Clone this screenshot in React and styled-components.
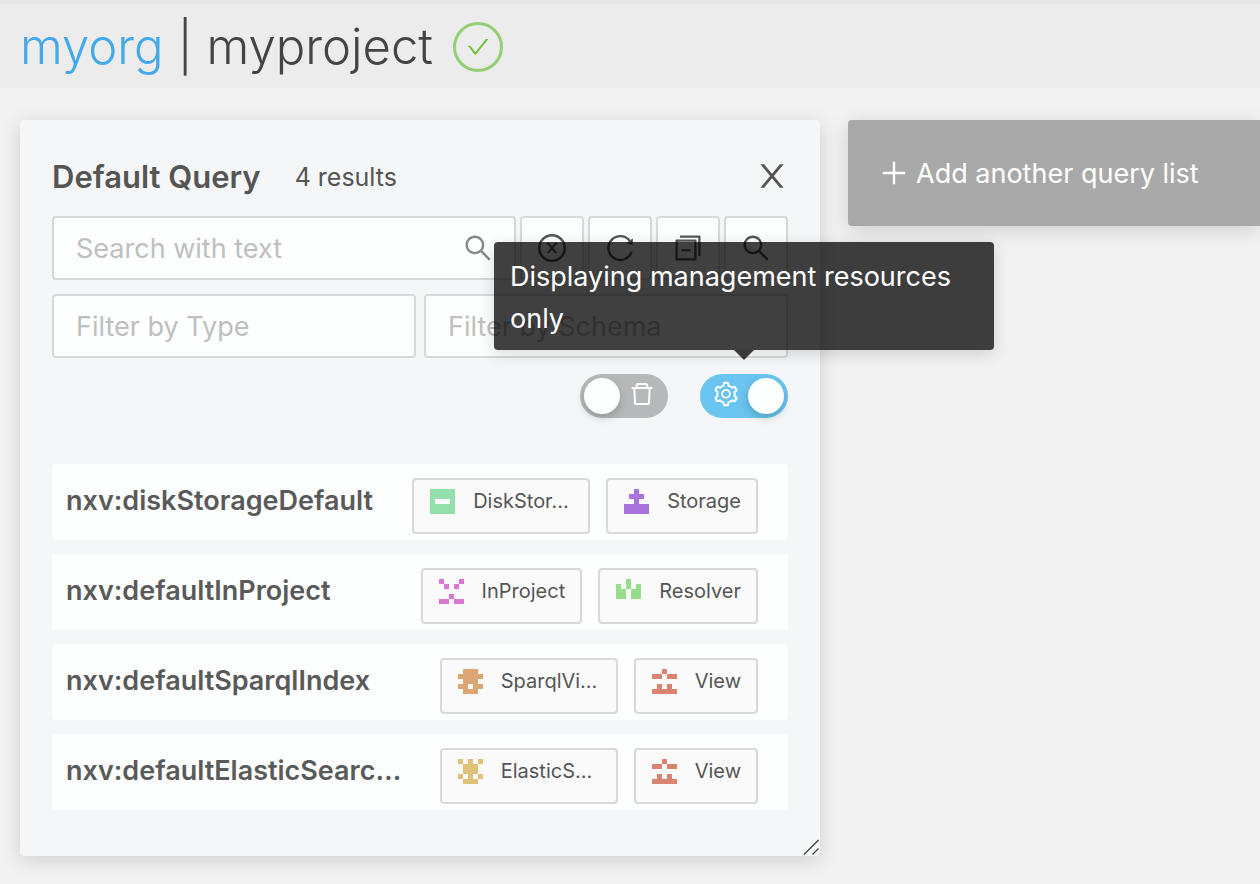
import React, { useState } from "react";
import styled, { createGlobalStyle } from "styled-components";
import {
  AiOutlineSearch,
  AiOutlineReload,
  AiOutlineSwitcher,
  AiOutlineDelete,
  AiOutlineSetting,
  AiOutlinePlus,
} from "react-icons/ai";

const GlobalStyle = createGlobalStyle`
  * { box-sizing: border-box; }
  body {
    margin: 0;
    background: #f2f2f2;
    color: #555;
    font-family: Inter, "Liberation Sans", sans-serif;
    font-size: 27px;
  }
  button, input { font: inherit; color: inherit; }
`;

const Header = styled.header`
  display: flex;
  align-items: center;
  gap: 20px;
  height: 88px;
  padding: 2px 20px 0;
  border-top: 4px solid #e5e5e5;
  background: #ececec;
`;

const Title = styled.h1`
  margin: 0;
  color: #444;
  font-size: 49px;
  font-weight: 300;
  line-height: 82px;
  white-space: nowrap;
`;

const OrgLink = styled.a`
  color: #44a9ea;
  text-decoration: none;
`;

const Status = styled.span`
  display: flex;
  align-items: center;
  justify-content: center;
  width: 50px;
  height: 50px;
  border: 3px solid #95cf74;
  border-radius: 50%;
  color: #6cc03c;
`;

const Board = styled.main`
  display: flex;
  align-items: flex-start;
  gap: 28px;
  padding: 32px 0 28px 20px;
`;

const Panel = styled.section`
  position: relative;
  flex: 0 0 auto;
  width: 800px;
  padding: 32px 32px 46px;
  border-radius: 4px;
  background: #f5f6f8;
  box-shadow: 0 4px 20px rgba(0, 0, 0, 0.15);
`;

const PanelHead = styled.div`
  display: flex;
  align-items: center;
  gap: 34px;
  height: 50px;
  margin-bottom: 14px;
`;

const PanelTitle = styled.h2`
  margin: 0;
  font-size: 31px;
  font-weight: 600;
  line-height: 48px;
`;

const Count = styled.span`
  flex: 1;
  font-size: 25px;
  line-height: 48px;
`;

const CloseButton = styled.button`
  display: flex;
  align-self: flex-start;
  padding: 8px 0;
  border: 0;
  background: none;
  color: #555;
`;

const Row = styled.div`
  display: flex;
  gap: ${(p) => p.$gap}px;
  margin-bottom: ${(p) => p.$after}px;
  justify-content: flex-end;
`;

const Field = styled.label`
  display: flex;
  flex: 1;
  align-items: center;
  min-width: 0;
  height: 64px;
  padding: 0 20px 0 22px;
  border: 2px solid #d9d9d9;
  border-radius: 4px;
  background: #fdfefe;
  color: #888;
`;

const TextInput = styled.input`
  flex: 1;
  min-width: 0;
  padding: 0;
  border: 0;
  outline: 0;
  background: none;
  color: #555;
  &::placeholder {
    color: #bfbfbf;
    opacity: 1;
  }
`;

const ToolButton = styled.button`
  display: flex;
  align-items: center;
  justify-content: center;
  width: 64px;
  height: 64px;
  padding: 0;
  border: 2px solid #d9d9d9;
  border-radius: 4px;
  background: #fdfefe;
  color: #555;
`;

const SwitchLabel = styled.label`
  position: relative;
  display: block;
`;

const SwitchInput = styled.input`
  position: absolute;
  inset: 0;
  width: 100%;
  height: 100%;
  margin: 0;
  opacity: 0;
`;

const Track = styled.span`
  display: flex;
  flex-direction: ${(p) => (p.$on ? "row-reverse" : "row")};
  align-items: center;
  gap: 8px;
  width: 88px;
  height: 44px;
  padding: 4px;
  border-radius: 22px;
  background: ${(p) => (p.$on ? "#69c4ef" : "#b7b8ba")};
  color: #fff;
  svg {
    margin-bottom: 4px;
  }
`;

const Knob = styled.span`
  width: 36px;
  height: 36px;
  border-radius: 50%;
  background: #fdfefe;
  box-shadow: 0 4px 8px rgba(0, 35, 11, 0.2);
`;

const Tooltip = styled.span`
  position: absolute;
  z-index: 2;
  bottom: calc(100% + 24px);
  left: 50%;
  width: 500px;
  padding: 14px 16px 10px;
  transform: translateX(-50%);
  border-radius: 4px;
  background: rgba(0, 0, 0, 0.75);
  box-shadow: 0 4px 16px rgba(0, 0, 0, 0.15);
  color: #fff;
  line-height: 42px;
  &::after {
    content: "";
    position: absolute;
    top: 100%;
    left: calc(50% - 10px);
    border: 10px solid transparent;
    border-bottom-width: 0;
    border-top-color: rgba(0, 0, 0, 0.75);
  }
`;

const List = styled.ul`
  display: flex;
  flex-direction: column;
  gap: 14px;
  margin: 0;
  padding: 0;
  list-style: none;
`;

const Item = styled.li`
  display: flex;
  align-items: flex-start;
  gap: 16px;
  height: 76px;
  padding: 14px 30px 0 14px;
  border-radius: 4px;
  background: #fdfefe;
`;

const ItemName = styled.a`
  flex: 1;
  color: #5a5a5a;
  font-weight: 600;
  line-height: 46px;
  text-decoration: none;
  white-space: nowrap;
`;

const Tag = styled.span`
  display: flex;
  gap: 18px;
  min-width: ${(p) => (p.$cut ? 178 : 0)}px;
  height: 56px;
  padding: 9px 15px 0 16px;
  border: 2px solid #d9d9d9;
  border-radius: 4px;
  background: #fafafa;
  font-size: 20px;
  line-height: 24px;
`;

const AddButton = styled.button`
  display: flex;
  flex: 1;
  align-items: center;
  gap: 6px;
  height: 106px;
  padding: 0 30px;
  border: 0;
  border-radius: 4px 0 0 4px;
  background: #a9a9a9;
  box-shadow: 0 4px 20px rgba(0, 0, 0, 0.15);
  color: #fff;
  white-space: nowrap;
`;

const Grip = styled.svg`
  position: absolute;
  right: 0;
  bottom: 0;
`;

const PATTERNS = {
  DiskStorage: ["#94dfab", "XXXXX XXXXX X...X XXXXX XXXXX"],
  Storage: ["#a873dc", "..X.. .XXX. ..X.. XXXXX XXXXX"],
  InProject: ["#d977d2", "X...X .X.X. ..... ..X.. XX.XX"],
  Resolver: ["#95df8c", "..X.. X.X.X XX.XX XX.XX ....."],
  SparqlView: ["#dba674", ".XXX. XXXXX .XXX. XX.XX .XXX."],
  View: ["#d98370", "..X.. XX.XX ..... .X.X. XXXXX"],
  ElasticSearchView: ["#dfc277", "X.X.X .XXX. .XXX. X.X.X .XXX."],
};

const ITEMS = [
  ["nxv:diskStorageDefault", ["DiskStorage", "DiskStor…"], ["Storage"]],
  ["nxv:defaultInProject", ["InProject"], ["Resolver"]],
  ["nxv:defaultSparqlIndex", ["SparqlView", "SparqlVi…"], ["View"]],
  ["nxv:defaultElasticSearc…", ["ElasticSearchView", "ElasticS…"], ["View"]],
];

function Identicon({ type }) {
  const [color, cells] = PATTERNS[type];
  const path = cells
    .split(" ")
    .flatMap((row, y) => [...row].map((c, x) => (c === "X" ? `M${x} ${y}h1v1h-1z` : "")))
    .join("");
  return (
    <svg width="25" height="25" viewBox="0 0 5 5" fill={color} shapeRendering="crispEdges" aria-hidden="true">
      <path d={path} />
    </svg>
  );
}

function Glyph({ size, paths }) {
  return (
    <svg width={size} height={size} viewBox="64 64 896 896" fill="currentColor" aria-hidden="true">
      {paths.map((d) => (
        <path key={d} d={d} />
      ))}
    </svg>
  );
}

const CHECK = [
  "M912 190h-69.9c-9.8 0-19.1 4.5-25.1 12.2L404.7 724.5 207 474a32 32 0 0 0-25.1-12.2H112c-6.7 0-10.4 7.7-6.3 12.9l273.9 347c12.8 16.2 37.4 16.2 50.3 0l488.4-618.9c4.1-5.1.4-12.8-6.3-12.8z",
];
const CLOSE = [
  "M563.8 512l262.5-312.9c4.4-5.2.7-13.1-6.1-13.1h-79.8c-4.7 0-9.2 2.1-12.3 5.7L511.6 449.8 295.1 191.7c-3-3.6-7.5-5.7-12.3-5.7H203c-6.8 0-10.5 7.9-6.1 13.1L459.4 512 196.9 824.9A7.95 7.95 0 0 0 203 838h79.8c4.7 0 9.2-2.1 12.3-5.7l216.5-258.1 216.5 258.1c3 3.6 7.5 5.7 12.3 5.7h79.8c6.8 0 10.5-7.9 6.1-13.1L563.8 512z",
];
const CLOSE_CIRCLE = [
  "M685.4 354.8c0-4.4-3.6-8-8-8l-66 .3L512 465.6l-99.3-118.4-66.1-.3c-4.4 0-8 3.5-8 8 0 1.9.7 3.7 1.9 5.2l130.1 155L340.5 670a8.32 8.32 0 0 0-1.9 5.2c0 4.4 3.6 8 8 8l66.1-.3L512 564.4l99.3 118.4 66 .3c4.4 0 8-3.5 8-8 0-1.9-.7-3.7-1.9-5.2L553.5 515l130.1-155c1.2-1.4 1.8-3.3 1.8-5.2z",
  "M512 65C264.6 65 64 265.6 64 513s200.6 448 448 448 448-200.6 448-448S759.4 65 512 65zm0 820c-205.4 0-372-166.6-372-372s166.6-372 372-372 372 166.6 372 372-166.6 372-372 372z",
];

function Switch({ label, icon, initial, tooltip }) {
  const [on, setOn] = useState(initial);
  return (
    <SwitchLabel>
      <SwitchInput type="checkbox" role="switch" aria-label={label} checked={on} onChange={() => setOn(!on)} />
      <Track $on={on}>
        <Knob />
        {icon}
      </Track>
      {tooltip && <Tooltip role="tooltip">{tooltip}</Tooltip>}
    </SwitchLabel>
  );
}

export default function App() {
  return (
    <>
      <GlobalStyle />
      <Header>
        <Title>
          <OrgLink href="#myorg">myorg</OrgLink> | myproject
        </Title>
        <Status>
          <Glyph size={22} paths={CHECK} />
        </Status>
      </Header>
      <Board>
        <Panel>
          <PanelHead>
            <PanelTitle>Default Query</PanelTitle>
            <Count>4 results</Count>
            <CloseButton type="button" aria-label="Close">
              <Glyph size={32} paths={CLOSE} />
            </CloseButton>
          </PanelHead>
          <Row $gap={4} $after={14}>
            <Field>
              <TextInput type="text" aria-label="Search" placeholder="Search with text" />
              <AiOutlineSearch size={32} />
            </Field>
            <ToolButton type="button" aria-label="Clear">
              <Glyph size={28} paths={CLOSE_CIRCLE} />
            </ToolButton>
            <ToolButton type="button" aria-label="Reload">
              <AiOutlineReload size={32} />
            </ToolButton>
            <ToolButton type="button" aria-label="Duplicate list">
              <AiOutlineSwitcher size={32} />
            </ToolButton>
            <ToolButton type="button" aria-label="Inspect">
              <AiOutlineSearch size={32} />
            </ToolButton>
          </Row>
          <Row $gap={8} $after={16}>
            <Field>
              <TextInput type="text" aria-label="Type" placeholder="Filter by Type" />
            </Field>
            <Field>
              <TextInput type="text" aria-label="Schema" placeholder="Filter by Schema" />
            </Field>
          </Row>
          <Row $gap={32} $after={46}>
            <Switch label="Deprecated resources" icon={<AiOutlineDelete size={28} />} initial={false} />
            <Switch
              label="Management resources"
              icon={<AiOutlineSetting size={28} />}
              initial={true}
              tooltip="Displaying management resources only"
            />
          </Row>
          <List>
            {ITEMS.map(([name, ...tags]) => (
              <Item key={name}>
                <ItemName href="#resource">{name}</ItemName>
                {tags.map(([type, short]) => (
                  <Tag key={type} $cut={Boolean(short)}>
                    <Identicon type={type} />
                    {short || type}
                  </Tag>
                ))}
              </Item>
            ))}
          </List>
          <Grip width="18" height="18" viewBox="0 0 18 18" stroke="#444" strokeWidth="1.4" aria-hidden="true">
            <path d="M2 16.500L16.500 2M10.500 16.500L16.500 10.500" />
          </Grip>
        </Panel>
        <AddButton type="button">
          <AiOutlinePlus size={32} />
          Add another query list
        </AddButton>
      </Board>
    </>
  );
}
